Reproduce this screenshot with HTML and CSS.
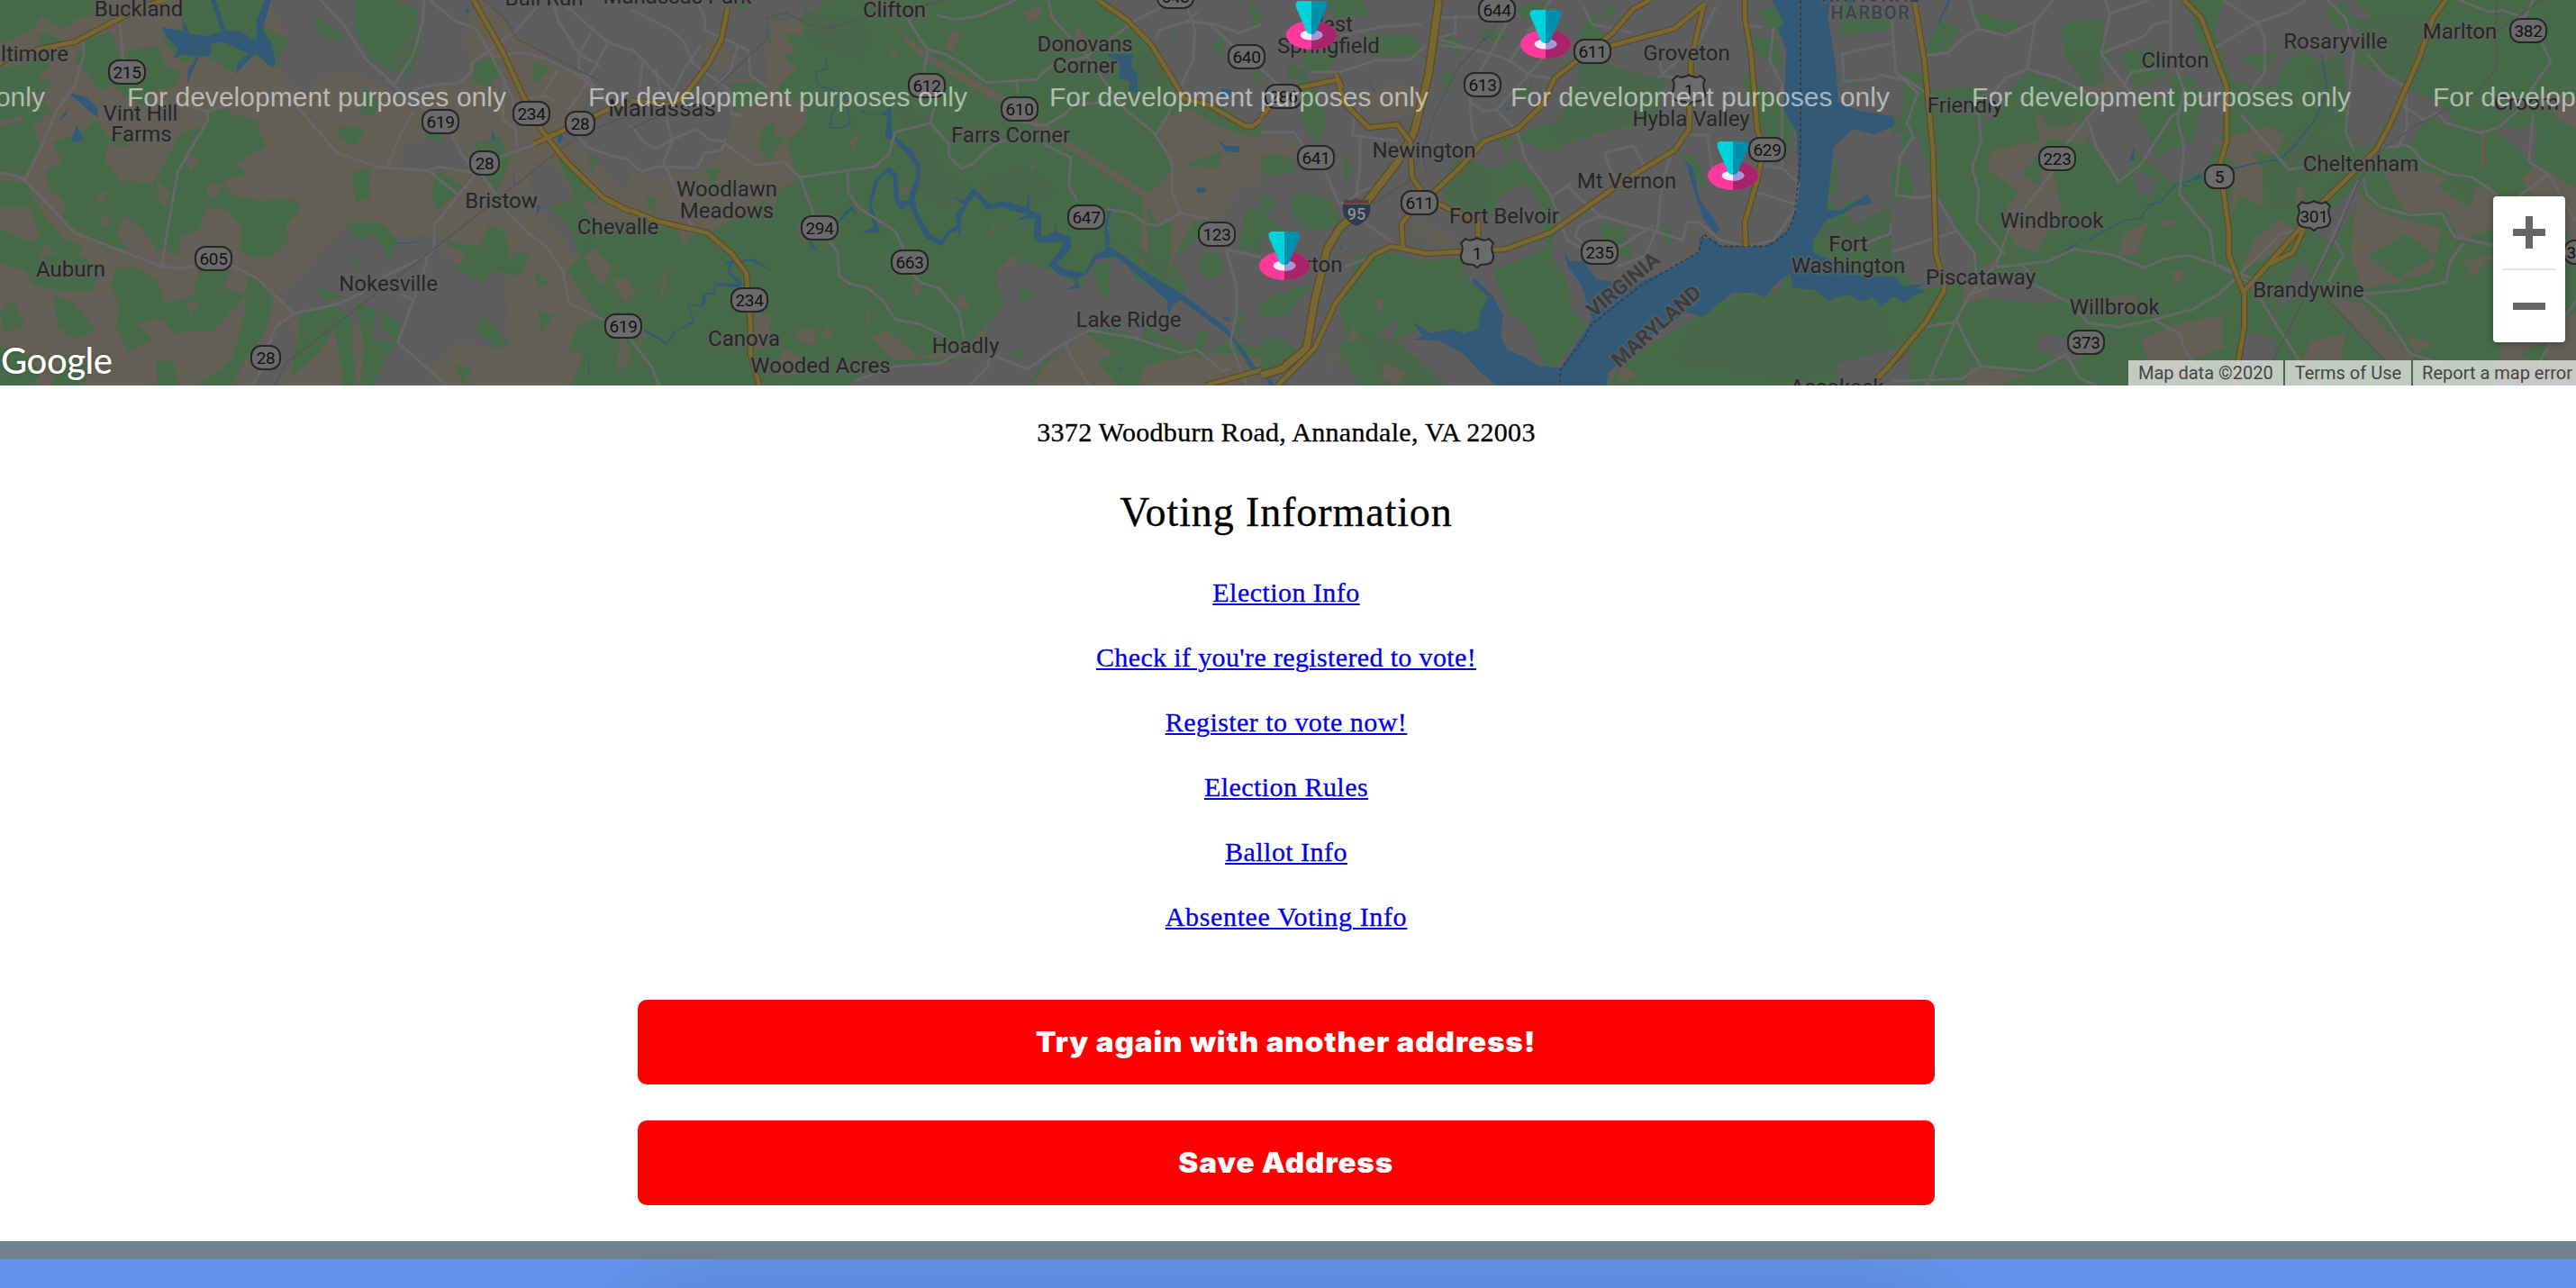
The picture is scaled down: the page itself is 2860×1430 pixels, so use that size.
FILE: index.html
```html
<!DOCTYPE html>
<html lang="en">
<head>
<meta charset="utf-8">
<title>Voting Information</title>
<link rel="stylesheet" href="styles.css">
</head>
<body>
<section class="map">
<svg class="map-canvas" viewBox="0 0 2860 428" width="2860" height="428">
  <defs>
    <g id="s3"><rect x="-20" y="-13" width="40" height="26" rx="11"/></g>
    <g id="s2"><rect x="-16" y="-13" width="32" height="26" rx="11"/></g>
    <path id="us" d="M-18 -10L-13 -15Q-9 -12 -5 -14Q-2 -14 0 -16Q2 -14 5 -14Q9 -12 13 -15L18 -10Q15 -6 17 0Q20 7 15 12Q10 14 4 14L0 17L-4 14Q-10 14 -15 12Q-20 7 -17 0Q-15 -6 -18 -10Z"/>
    <g id="pin">
      <ellipse rx="28" ry="16" fill="#ff3a9c"/><path d="M0-16A28 16 0 0 1 0 16Z" fill="#a8246a"/>
      <ellipse rx="12.3" ry="5.5" fill="#f4eeff"/><path d="M0-5.500A12.300 5.500 0 0 1 0 5.500Z" fill="#a596d8"/>
      <path d="M0-38H-14Q-19-37-17-31L-5-3Q-3-1 0-1Z" fill="#00d2dc"/><path d="M0-38H14Q19-37 17-31L5-3Q3-1 0-1Z" fill="#008fae"/>
    </g>
  </defs>
  <rect width="2860" height="428" fill="#656056"/>
  <!-- west: farmland -->
  <g transform="scale(.45918 .33333)">
    <path class="urban" d="M650 0H1150L1125 130 1140 240 1050 290 1000 370 960 310 850 240 770 250 745 320 700 280 665 200 700 130ZM1180 0H1568V560L1500 640 1440 520 1340 465 1380 430 1440 260 1370 230 1290 160 1230 90ZM1290 540L1350 560 1405 720 1400 860 1330 750 1280 620ZM680 980L790 820 850 740 930 790 1040 780 1080 860 1150 910 1220 900 1235 1170 1110 1140 1030 1240 1050 1284H880L880 1100 800 1030 710 1040ZM690 1060L720 1120 710 1200 670 1284H610L650 1160ZM980 480L1080 450 1130 520 1120 570 970 560Z"/>
    <path class="wood" d="M0 0H230L235 50 190 60 150 95 100 55 70 110 0 145ZM90 115L125 110 155 150 105 155ZM210 130L270 105 290 180 380 150 400 215 440 240 420 290 370 300 350 350 290 310 270 285 240 300 210 240 180 200ZM440 0H650L620 80 700 130 665 230 610 180 560 240 500 185 440 210 390 130 440 90ZM0 225L60 215 95 170 120 220 90 260 130 270 100 310 60 320 80 370 20 400 0 400ZM0 420L60 400 40 350 100 330 125 370 80 420 95 490 75 570 40 590 0 575ZM125 470L200 440 230 400 260 450 330 460 300 490 260 480 255 540 290 600 370 610 410 510 440 440 520 410 570 380 620 400 640 490 570 545 600 580 540 600 560 650 640 670 710 660 730 690 690 750 700 800 660 850 610 860 580 830 585 760 550 700 500 690 480 770 440 780 430 850 380 830 340 760 300 720 280 780 310 830 250 820 190 770 150 740 160 680 120 630 110 570 150 540ZM170 580L200 560 230 640 190 650ZM0 600L60 610 100 700 150 790 200 820 190 860 130 840 95 790 70 690 0 690ZM0 760L60 800 120 790 90 860 150 840 210 860 240 920 220 970 150 970 80 950 60 900 0 880ZM280 890L330 890 380 930 400 1010 470 980 480 890 560 900 540 960 600 980 550 1050 520 1100 420 1110 390 1060 330 1080 370 1130 310 1170 280 1090 290 1020 270 960ZM130 980L180 1010 230 1100 180 1130 140 1090ZM600 900L660 1000 640 1110 580 1230 560 1284H480L560 1200 590 1060ZM30 1000L60 1080 10 1110 0 1040ZM0 1150L60 1180 100 1240 80 1284H0ZM380 1200L420 1205 430 1284H380ZM160 1180L220 1230 200 1284H120ZM860 0H960L1015 30 1000 110 950 240 900 200 860 110ZM960 240L1020 70 1015 180 980 260ZM760 50L830 120 820 140 770 120ZM500 380L550 360 580 440 540 500 500 470ZM820 420L880 430 860 490 820 460ZM880 290L920 340 900 390 870 380ZM850 570L890 560 895 660 860 670ZM1030 400L1080 400 1070 480 1030 460ZM1060 570L1120 620 1060 700 1040 650ZM1150 210L1200 180 1210 240 1180 290 1140 270ZM1290 200L1330 230 1290 280ZM1150 480L1210 450 1230 550 1200 640 1160 580ZM830 740L920 740 960 800 940 870 900 780 860 800ZM850 840L870 880 860 910ZM1060 800L1160 820 1180 750 1220 770 1230 830 1280 850 1260 920 1190 900 1170 940 1100 900 1130 850ZM720 1040L800 1010 850 1060 860 1284H830L810 1100 760 1190 700 1260 720 1130ZM860 1010L910 1030 900 1140 960 1130 900 1284H870L880 1150ZM925 1030L970 1080 960 1130 920 1090ZM1170 1050L1210 1110 1230 1140 1200 1160 1150 1100ZM1330 690L1400 660 1440 740 1568 760V1100L1500 1060 1450 960 1480 890 1440 830 1400 860 1380 760ZM1340 500L1400 560 1450 680 1390 660ZM1410 850L1440 930 1568 1100V1284H1380L1410 1180 1370 1170 1400 1080 1450 1060 1370 900ZM1290 900L1330 950 1300 950ZM1300 1030L1335 1050 1310 1110ZM1100 1210L1140 1230 1120 1284ZM1420 500L1450 530 1430 570ZM760 950L830 990 780 1000Z"/>
    <path class="field" d="M230 660L260 630 250 680ZM240 700L270 740 250 760ZM500 610L540 620 520 660 500 650ZM380 600L410 640 400 690 380 660ZM440 510L480 530 460 570ZM1480 930L1540 930 1510 1010ZM1500 1110L1540 1190 1490 1240ZM450 1000L480 1010 460 1050ZM1230 830L1245 850 1230 860Z"/>
    <path class="lake" d="M390 90L445 105 440 60 460 115 500 120 535 105 510 0H522L545 100 580 105 620 135V70L640 0H655L635 100 655 140 667 210 655 223 620 178 590 215 570 248 575 210 600 178 540 140 512 145 508 185 480 190 452 282 455 230 475 190 440 180 420 195 430 160 405 130ZM170 310L210 325 236 360V392L170 315ZM163 358L143 400 160 385ZM185 418L202 460 190 475 172 468ZM950 803Q990 820 1030 790Q1000 820 955 810ZM1210 893L1250 899 1215 897ZM1300 680L1308 690 1295 722ZM1240 540L1245 620 1242 620ZM1188 425L1200 472 1190 465ZM1350 450L1362 450 1355 480 1346 470ZM1125 25L1135 35 1128 50ZM1425 790L1408 860 1422 800ZM1420 1170L1427 1250 1424 1250ZM1552 1090L1568 1105V1120Z"/>
    <path class="rd" d="M290 80L298 200M200 140L203 180 180 290 140 360 100 490 60 600 180 775 390 887 440 895 470 885M390 887L430 570 503 400 500 370 440 345M500 370L545 350M0 577Q40 580 60 600M560 885L625 930 710 1045 665 1090 650 1150M635 1225L610 1284M775 0L830 80 885 200 925 245 985 330 1040 370M1025 0L1023 65 1000 180 955 280M690 310L740 390 815 508 915 557 1035 568 1060 555 1145 575 1205 525 1300 478M1035 568L1105 645M1000 370L960 470 938 557M1085 430L1115 510 1140 555M1300 20L1250 100 1140 210 1140 240 1110 275 1040 285 1000 300M1150 580L1050 750 1050 825 1035 850 930 920 870 980 810 1015 710 1045M1165 580L1230 710 1275 775 1320 820 1360 900 1375 1010 1460 1065M1035 850L1025 900 1000 1000 962 1140 1080 1284M970 980L1000 1000M1040 0L1100 70 1150 95 1190 190 1260 175 1320 195 1400 250 1470 340 1510 350M1340 20L1350 70 1400 180V230L1440 290M1370 20L1435 100 1470 140 1550 180 1568 200M1430 110L1400 180 1450 220M1470 140L1400 320 1370 370M1350 230L1310 320M1190 190L1240 330 1250 490M1220 260L1215 400 1245 430M1260 330L1320 320 1345 340M1380 430L1420 490 1480 520 1520 530 1550 570 1568 565M1568 210L1550 350 1568 400"/>
    <path class="rail" d="M665 1284L690 1210 1030 850 1400 450 1568 360M1170 0L1220 60 1250 130 1450 270"/>
    <path class="hw-e" d="M-20 225L20 195 90 165 180 140 270 75 350 20 400 0M1145 0L1215 170 1265 320 1310 435 1370 540 1460 660 1568 735M1290 480L1470 365 1568 330"/>
    <path class="hw" d="M-20 225L20 195 90 165 180 140 270 75 350 20 400 0M1145 0L1215 170 1265 320 1310 435 1370 540 1460 660 1568 735M1290 480L1470 365 1568 330"/>
  </g>
  <!-- centre-west: woods along the Occoquan -->
  <g transform="translate(700 0) scale(.45918 .33333)">
    <path class="wood" d="M330 60L470 0H1568V1284H0V750L200 770 400 600 380 480 430 360 350 300 400 230 330 140Z"/>
    <path class="urban" d="M0 0H470L430 60 340 60 330 210 330 280 280 270 240 260 250 370 230 500 170 570 100 610 40 590 0 570ZM1150 0H1568V430L1500 420 1430 350 1350 330 1290 210 1230 110ZM1500 600L1568 590V1170L1460 1140 1380 1170 1300 1120 1280 1150 1160 1090 1100 1100 1060 1160 1000 1200 960 1284H530L570 1240 800 1200 850 1180 870 1080 900 1010 880 910 960 870 1040 920 1090 960 1130 850 1200 870 1220 930 1310 990 1350 960 1310 870 1390 770 1440 670Z"/>
    <path class="field" d="M0 570L40 590 170 570 230 500 250 370 300 350 400 360 430 400 380 470 400 590 360 620 350 690 290 640 240 700 200 690 160 760 130 820 110 760 0 720ZM190 120L270 200 230 250 170 180ZM340 70L410 60 420 120 370 110 400 180 340 180ZM780 90L800 130 780 150 790 180 760 160ZM625 160L650 175 630 190ZM950 40L1000 15 990 60 960 70ZM555 430L540 510 530 480ZM665 600L675 640 650 660ZM970 545L985 555 965 580ZM610 60L720 180 930 340 1060 470 1250 640V880L1230 880 1240 660 1050 490 900 350 700 190ZM1280 400L1350 360 1420 420 1568 480V600L1480 620 1430 720 1360 740 1310 870 1300 960 1310 740 1270 740 1240 660 1310 570 1280 460ZM80 900L90 930 70 1020ZM20 1080L40 1120 20 1150ZM300 1040L340 1050 330 1150 300 1180ZM370 1160L410 1190 400 1250 350 1250ZM395 1100L440 1095 450 1150 410 1140ZM480 1080L490 1130 460 1120ZM570 1010L580 1060 570 1080ZM680 940L710 950 690 990ZM800 970L820 1030 785 1020ZM740 980L730 1010ZM580 1120L640 1200 840 1190 870 1060 820 1150 700 1190 620 1100ZM880 910L930 840 935 880ZM1100 1110L1170 1180 1130 1210 1180 1284H970L1000 1220ZM1240 1220L1390 1170 1568 1200V1284H1230ZM870 750L885 760 870 785ZM580 0L600 30 640 10ZM0 950L15 980 0 1010ZM1080 80L1120 170 1070 150ZM400 750L430 740 420 820Z"/>
    <path class="wood" d="M240 280L320 270 330 320 250 370ZM180 560L220 560 200 610 240 620 200 640ZM30 660L60 650 60 710ZM320 420L350 410 350 460 380 450 330 540 310 490ZM1340 550L1430 500 1420 560ZM1490 680L1568 750V850L1470 830ZM1380 850L1420 840 1440 900 1400 930 1370 890ZM1460 1030L1480 1040 1470 1150ZM1370 1110L1400 1100 1380 1200 1360 1170ZM940 960L980 970 950 1020ZM1120 880L1160 870 1160 1000 1130 970ZM920 1170L950 1160 940 1210ZM1240 1080L1300 1130 1240 1140ZM1400 160L1430 120 1440 190ZM1500 200L1568 190V290L1510 270ZM1310 110L1320 130 1300 140ZM1260 200L1340 340 1280 330ZM1490 0L1530 50 1510 110ZM260 0L290 15 265 40ZM120 70L130 90 115 90Z"/>
    <path class="park" d="M420 30L580 100 560 200 430 140ZM640 350L720 400 750 560 820 620 760 700 700 640 680 480ZM850 600L950 560 1040 640 960 690 870 670ZM1220 180L1290 210 1280 300 1230 290ZM1200 800L1310 900 1280 930ZM1568 740L1500 830 1568 880Z"/>
    <path class="lake" d="M470 130L452 180 458 160ZM475 90L505 92 475 95ZM555 365L575 380 605 382 630 355 632 445 655 470 680 500 700 545V600L687 660 695 710 725 780 750 800 765 770 790 750 785 715 805 680 780 658 805 665 830 625 870 680 905 670 955 690 963 643 966 700 993 715V790L1025 775V738L1032 775 1065 790V830L1030 880 1050 895 1100 910 1120 850 1150 830 1145 760 1158 690 1180 695 1160 710 1152 760 1160 800 1155 820 1185 845 1240 900 1340 985 1440 1090 1480 1160 1510 1220 1568 1250V1284H1550L1495 1220 1455 1130 1420 1090 1330 1000 1310 1020 1300 1050 1297 1000 1230 920 1175 855 1130 860 1100 915 1080 930 1085 960 1055 965 1075 950V930L1035 915 1010 880 1030 850 1050 805 990 810 975 790 978 725 930 735 960 715 895 690 860 700 835 650 815 680 800 720 797 795 790 765 770 780 753 820 715 795 685 720 675 680 655 700 638 670 635 590 622 575 600 600 583 680 600 760 605 775 560 775 590 755 580 720 577 670 590 600 625 555 645 580 650 670 670 670 690 590 690 550 660 500 640 470 615 460 622 385 565 380ZM500 745L515 710 535 685 550 722 535 700 512 730ZM430 795L455 840 435 825ZM1150 180L1215 180 1210 220 1227 250 1225 310 1205 300 1208 270 1180 260 1185 220ZM1420 465L1440 485 1475 487 1470 508 1440 505ZM1370 625L1390 625V642H1370ZM225 872L300 862 340 900 315 885 290 868 245 880 240 905 270 940 265 960 205 950 205 980 180 980 183 1005 175 1022 140 1015 155 1075 110 1105 88 1150 30 1100 40 1100 88 1140 105 1105 150 1070 138 1012 172 1018 175 980 200 972 205 942 260 945 235 910 238 880ZM1430 1060L1448 1055V1075ZM1180 1230L1190 1225 1178 1242ZM1430 295L1455 300 1450 320 1425 318Z"/>
    <path class="creek" d="M472 195L475 228 447 240 455 285 500 305 520 320 490 370 482 425 508 425 532 412 524 355"/>
    <path class="rd" d="M670 60L700 130 718 165 710 240M718 165L760 180 800 210 860 275 980 265 1020 215 1100 190 1170 120 1230 60 1290 20M740 50L785 65 850 50 930 0M1010 0L1020 60 1100 180 1140 260 1200 370 1265 440 1310 540V640L1330 710 1400 730M933 270L937 310M733 360L725 410 640 440 625 515 590 555 410 590M725 410L770 480V520L800 560 830 545 850 515 880 480 910 465M930 400L1000 420 1050 380 1070 350 1150 340M1000 480L1065 525 1060 620 1080 670M1150 695L1210 710 1245 745 1275 752 1330 710M525 575L527 640 550 690 640 770 660 830M680 910L700 940 745 960 795 1040 807 1130M0 415L30 470 60 495 100 465 160 430 190 465 220 470 300 550 370 540 410 590 450 740M480 800L500 840 505 920 530 945 575 960 610 1000 640 1065 700 1080 760 1120M540 1270L640 1220 750 1210 810 1160M820 1284L865 1220 870 1180 960 1230 1040 1150 1110 1100 1220 1125 1260 1145 1330 1175 1370 1165 1430 1235 1450 1230M1050 1140L1070 1200 1110 1284M1440 830L1465 950V1050L1450 1140 1490 1284M1440 830L1568 870M1340 0L1365 100 1360 200 1300 380 1270 450M1350 70L1410 80 1470 110 1568 60M1400 80L1470 170M1270 130L1280 100 1350 70 1370 40M0 30L100 100 130 140 150 210 200 260 240 300 245 380 270 385M0 160L30 200 100 300 130 370M180 60L180 100 260 150 240 240 180 330M170 150L130 230 100 310M260 150L285 170 290 250 330 290M30 200L20 320M60 230L100 470 80 540 150 760M0 540L25 570 70 555 160 560 180 510 220 500 230 460M0 1130L50 1220 70 1284M160 0L180 60M1530 400L1550 440 1568 450"/>
    <path class="rail" d="M0 430L200 300 330 130V60L375 42 460 100 560 60M700 20L760 0"/>
    <path class="hw-e" d="M235 25L220 130 190 210 130 320 100 350 0 335M0 700L60 735 185 775 245 845 280 910 290 1080V1180L312 1284M1130 0L1200 65 1260 150 1340 330 1400 350 1485 420H1505L1568 350M1390 1284L1568 1215"/>
    <path class="hw" d="M235 25L220 130 190 210 130 320 100 350 0 335M0 700L60 735 185 775 245 845 280 910 290 1080V1180L312 1284M1130 0L1200 65 1260 150 1340 330 1400 350 1485 420H1505L1568 350M1390 1284L1568 1215"/>
  </g>
  <!-- centre-east: Potomac -->
  <g transform="translate(1400 0) scale(.45918 .33333)">
    <rect width="1568" height="1290" fill="#5e5e5e"/>
    <path class="wood" d="M235 850L310 840 400 870 480 860 500 930 550 990 580 1080 550 1120 520 1110 460 1100 380 1100 320 1130 330 1060 270 1130 290 1200 350 1284H240L180 1160 210 1130 190 1030 210 940ZM700 500L850 430 1010 400 900 360 980 280 850 220 820 280 750 290 730 400 650 430 590 500 640 560 700 640 720 700 700 850 740 940 750 1030 790 1080 720 1210 690 1220 640 1080 600 1040 560 900 690 830 680 700 620 560 560 450ZM510 530L550 560 640 540 650 600 580 650 560 720 470 700 440 650ZM70 660L100 640 160 660 200 740 130 770 80 730ZM0 640L40 680 10 720 60 770 0 800ZM85 220L120 270 160 400 140 480 100 420ZM100 170L200 150 160 240 100 230ZM240 120L360 110 390 180 270 190ZM160 0H240L260 50 180 60ZM0 480L60 510 90 570 30 590 0 570ZM440 110L490 140 480 180 440 160ZM440 240L470 250 440 310ZM520 90L600 110 570 150ZM600 20L690 10 680 100 640 60ZM840 0L860 30 830 80ZM770 100L800 45 830 130 800 250ZM1160 240L1280 350 1290 430 1270 530 1220 450 1180 340ZM1180 120L1250 130 1260 230 1200 180ZM1200 30L1290 20 1260 120 1230 100ZM1010 500L1060 540 1080 640 1050 600ZM820 740L880 760 900 860 830 840ZM130 940L60 1050 0 1060V1000ZM40 1120L90 1170 60 1240 0 1250V1140ZM1390 240L1568 400V340L1440 270ZM1400 0L1568 90 1400 120ZM1290 480L1310 600 1400 700 1420 660 1360 640ZM1400 500L1568 440V1290H1290L1380 1200 1280 920ZM1100 620L1150 560 1130 560ZM960 720L1000 800 980 820ZM200 620L220 560 200 500Z"/>
    <path class="wood" d="M840 1284L870 1210 1060 1050 1150 975 1230 990 1280 910 1290 960 1400 990 1568 1010V1284Z"/>
    <path class="park" d="M1040 1090L1160 1000 1310 950 1380 1010 1500 1030 1530 1150 1400 1240 1260 1260 1120 1220 1000 1200ZM770 130L820 150 850 230 980 260 960 390 720 470 700 430 770 290ZM440 640L470 530 540 560 560 640 520 720ZM250 1120L330 1130 450 1284H300ZM60 210L110 240 100 270 60 260ZM600 330L660 260 650 320ZM1340 780L1420 720 1500 640 1568 760 1520 860Z"/>
    <path class="field" d="M220 320L310 280 390 290 380 380 270 400ZM0 440L90 480 80 530 30 510 0 520ZM360 760L380 730 470 790 450 840 430 820ZM270 1000L295 990 290 1050ZM170 1180L185 1190 160 1260ZM300 1210L350 1240 330 1284 290 1260ZM870 1210L910 1250 860 1284ZM220 1080L240 1130 210 1140Z"/>
    <path class="urban" d="M1410 290L1530 260 1568 330V650L1430 750 1420 700 1480 650 1400 680 1390 480 1530 430 1500 330ZM1390 1210L1568 1150V1284H1400Z"/>
    <path class="lake" d="M1235 0H1378L1370 50 1390 220 1395 340 1450 370 1500 380 1530 390 1532 420 1480 447 1430 430 1385 490 1368 700 1405 700 1435 675 1465 647 1480 680 1440 685 1410 710 1370 730 1335 800V840L1400 880 1450 920 1530 920 1568 970V990L1530 985 1500 1020 1480 990 1450 1005 1420 980 1370 1000 1340 965 1285 960 1280 910 1240 950 1220 990 1190 975 1140 975 1068 1055 1030 1040 950 1110 840 1240 835 1284H570L530 1240 490 1180 430 1135 370 1130 390 1120 368 1072 410 1110 460 1095 490 1110 525 1095 530 1040 550 990 510 940 515 925 560 985 585 1050 580 1120 595 1165 640 1190 670 1220 725 1225 780 1110 800 1060 775 950 740 885 735 835 745 870 780 870 810 930 900 950 1000 890 1060 840V790L1100 800 1110 820H1220L1280 760 1300 600 1295 440 1265 370 1270 170 1250 90 1265 80ZM1025 530L1045 560 1060 660 1110 760 1100 780 1070 730 1048 640ZM0 1225L35 1284H20ZM1400 0H1440L1430 20ZM535 125L552 120 540 140ZM258 268L278 305 272 305ZM590 358L605 360 597 368ZM325 705H350ZM190 795L197 835 192 830Z"/>
    <path class="rd" d="M430 150L520 165 600 200 650 250 700 260M470 50L470 110 420 130M420 60L540 55M420 125L550 180M600 60L550 190 505 290V340L540 370 570 365 640 260 690 180M700 0L650 100 600 210M505 340L510 430 520 470M570 365L620 440 640 530 700 650 740 800 780 830M780 20L800 80 900 110M1100 20L1060 140 960 260M960 160L970 250 1030 270M830 510L900 485 930 560M830 510L850 580 870 600M1000 490L970 600 960 750 930 850 860 890M1030 450L1080 450 1090 560M700 660L750 610M740 620L820 720 770 750 760 790 800 830 870 820 950 750M820 720L950 770 1020 800 1030 740 1060 740 1110 800 1180 820 1240 800 1290 700 1300 610 1260 560 1210 550M1200 640L1290 680M1210 90L1160 80M1240 90L1230 200 1260 280V560M1410 270L1405 180 1568 130M1410 270L1480 265 1500 250 1568 270M155 570L190 680 220 660 240 640 290 610M240 460L240 550 230 650M0 440H80L110 500 150 520M220 450L330 470M220 450L225 400 240 350M120 240L190 240 280 200H360L400 150M190 120L290 90 390 80M230 720L320 810M200 890L280 850M0 230L40 280M1568 660L1530 720 1520 780 1480 800 1420 840M1500 1040M640 100L700 90"/>
    <path class="rail" d="M600 0L560 100 480 220 420 380 400 470 360 600 270 680M390 520L400 570M120 1100L80 1200 50 1284"/>
    <path class="border" d="M1305 0V520L1290 720 1270 780 1225 820H1110L1070 780 1058 840 920 950 800 1080 780 1130 725 1230 722 1284"/>
    <path class="hw-e wide" d="M430 0L405 250 370 440 330 540 240 700 190 760 160 830 130 1000 110 1160 50 1230 0 1250"/>
    <path class="hw wide" d="M430 0L405 250 370 440 330 540 240 700 190 760 160 830 130 1000 110 1160 50 1230 0 1250"/>
    <path class="hw-e" d="M0 390L50 310 100 290 185 265 200 340 260 425 330 415 360 470 365 590 395 650 340 745 343 830M180 245L195 290M940 0L900 30 850 110 710 260 680 350 620 430 540 470 480 560 410 650M840 155L1000 95 1075 10M1070 20L1040 200 1035 430 1000 500 880 600 700 775 590 830 400 845 315 820 270 850 180 1010 130 1160 40 1284M430 680L525 740V800M1170 0V60L1185 180 1200 430 1215 500 1200 600 1170 740 1172 820M1568 1150L1490 1260"/>
    <path class="hw" d="M0 390L50 310 100 290 185 265 200 340 260 425 330 415 360 470 365 590 395 650 340 745 343 830M180 245L195 290M940 0L900 30 850 110 710 260 680 350 620 430 540 470 480 560 410 650M840 155L1000 95 1075 10M1070 20L1040 200 1035 430 1000 500 880 600 700 775 590 830 400 845 315 820 270 850 180 1010 130 1160 40 1284M430 680L525 740V800M1170 0V60L1185 180 1200 430 1215 500 1200 600 1170 740 1172 820M1568 1150L1490 1260"/>
  </g>
  <!-- east: Prince George's County -->
  <g transform="translate(2100 0) scale(.48469 .33333)">
    <path class="wood" d="M42 0H1568V1290H42Z"/>
    <path class="urban" d="M0 0H680L700 130 760 270V430L720 560 640 610 560 500 530 600 450 470 440 380 520 300 440 290 310 240 180 440 240 380 200 290 90 300 40 250 0 240ZM760 0H1060L1110 80 1050 200 1170 270 1180 350 1090 500 1050 460 1040 250 940 170 900 210 880 290 780 270 740 110ZM1150 290L1280 340 1300 400 1220 400 1190 470 1120 500ZM0 440L60 450 100 640 150 770 190 840 180 940 60 960 0 830ZM550 560L610 600 600 660 560 640ZM200 920L330 950 400 1000 330 1010 190 990ZM340 1110L480 1150 410 1210 330 1160ZM930 880L950 870 960 960 880 1030ZM800 1110L880 1120 880 1200 790 1220ZM960 760L1080 600 1060 700 1010 820ZM600 50L560 130 500 170 520 60ZM1480 420L1470 560 1440 500 1380 430Z"/>
    <path class="field" d="M430 160L480 150 460 240 435 230ZM330 380L460 420 440 480 360 460 300 580 370 560 390 700 330 840 280 820 260 700 290 640 220 560 230 500 340 470ZM420 230L530 270 500 340 440 300ZM860 420L900 450 880 520 820 500 850 560 850 690 800 650 770 750 790 560 740 470ZM1070 640L1110 700 1180 730 1260 760 1240 900 1160 940 1080 960 1050 860 1060 740ZM1120 540L1200 560 1380 640V760L1300 800 1270 700 1180 710 1140 620ZM1350 430V560H1360V430ZM1480 550L1568 630V820L1500 700 1440 600ZM890 730L940 780 870 850 800 900 830 800ZM530 780L590 740 560 850 520 850ZM620 730L660 740 620 760ZM570 1130L650 1080 760 1050 760 1160 690 1200 650 1284 590 1210ZM960 1140L1040 1110 1030 1200 940 1200ZM1000 990L1080 1010 1200 1200H1130L1060 1090ZM1380 850L1330 920 1310 870ZM1400 1140L1568 1040V1284H1380ZM490 990L570 980 530 1060ZM170 930L240 860 220 990 160 1010ZM180 1220L320 1250 240 1284H170ZM930 610L950 640 930 700ZM1000 340L1020 300 1010 420ZM1480 300L1568 330V430L1530 400ZM640 900L680 900 650 950ZM1180 1120L1240 1140 1200 1180Z"/>
    <path class="wood" d="M30 240L80 250 60 430 20 520ZM170 20L250 70 280 60 300 100 220 110ZM390 80L480 60 500 200 470 240 400 200ZM520 180L600 160 640 240 560 300ZM0 560L40 540 50 660 0 670ZM570 340L720 290 690 470 600 520ZM640 250L700 260 680 330 640 310ZM580 310L640 350 600 440 560 400ZM990 30L1040 10 1070 90 1020 100ZM800 190L890 170 850 250ZM110 70L160 90 130 160 70 190ZM1240 330L1290 400 1350 320 1280 300ZM300 580L340 560 340 620ZM1180 780L1250 850 1160 930 1090 850ZM1250 620L1290 580 1330 700ZM1440 1180L1500 1130 1500 1240Z"/>
    <path class="park" d="M1060 60L1230 70 1200 270 1110 230ZM860 570L940 420 1050 500 930 610 910 700 870 680ZM960 230L1040 160 1030 400 980 420ZM400 180L470 190 490 280 440 290ZM340 380L420 340 410 420 360 430ZM1290 600L1340 610 1330 690ZM0 380H20L20 440 0 450Z"/>
    <path class="lake" d="M130 0H136L105 90 110 60ZM555 487L557 530 545 535ZM0 940L20 955 80 945 55 960 80 970 50 985 30 1008 0 985ZM0 380L8 410 0 430ZM50 990L65 1008ZM390 840L440 795 410 830ZM690 590L715 575 700 600ZM645 615L680 618 680 624Z"/>
    <path class="creek" d="M985 180L998 300 970 400 920 490 890 530 820 548 760 570 700 595 650 618 615 675 592 680 570 728 535 732 500 760 450 800"/>
    <path class="rd" d="M0 60L10 240 90 320 200 380 205 470 185 560 200 640 195 740 260 850M10 240L60 310 35 410 50 455 20 520 10 650 60 660 100 650M100 650L150 770 190 840 195 950M0 840L150 770M180 0L190 60 200 95 260 120 330 70 370 0M80 185L130 175 160 130 200 95M330 70L310 230 260 260 200 380M310 230L380 260 450 310 480 330M480 340L400 480M370 570L270 760 240 880 180 980 150 1060 80 1284M240 890L360 870 420 830 510 850 580 892 620 865 680 850 740 880 820 940 970 1284M640 0V180L670 300 655 400 670 490 660 650 730 770 740 880 830 930M490 0L500 50 480 180 560 330M500 45L590 0M480 180L520 155 580 120 600 80 640 70M760 0L838 75 740 160M838 75L910 40 950 0M838 75L855 130V240L820 310 700 320M530 290L550 240 640 220M450 400L470 490 520 605 570 550 640 390 660 370M800 380L860 480 910 565 950 555M1000 0L1040 60 1060 160 1040 440 1060 500M1090 180L1130 250 1180 290 1170 350 1220 400 1250 375 1270 410 1350 443 1390 425 1450 350M1180 290L1180 430 1160 490 1110 490M1160 480L1190 490 1220 540 1280 580 1330 590 1390 650M1080 590L1090 650 1120 690 1190 717 1260 710 1290 790 1390 820M1310 810L1280 870 1270 940 1190 965 1080 980 1000 960M1300 0L1370 40 1400 35 1450 60 1470 0M1490 145L1510 205 1460 310M1470 380L1460 540 1505 580 1450 640 1430 660M1505 580L1568 740M1070 600L960 950M1015 800L1035 850 1000 940M1080 990L1130 1050 1190 1180 1260 1210M800 910L890 780 950 760M800 910L750 980 690 1030 600 1065 520 1090 450 1075 410 1010 330 950 280 930 180 980M600 1065L660 1110 670 1160 710 1250M80 1090L150 1070 180 1160 205 1220 330 1235 400 1180 430 1260 470 1284M0 1270L160 1262 205 1220M300 880L320 920M1568 1000L1540 1060 1480 1220"/>
    <path class="rail" d="M1385 0V230L1340 310 1200 420 1120 500 1070 610 1015 800 940 1010 870 1210M1000 1000L1130 1200M1490 0L1380 110"/>
    <path class="hw-e" d="M52 0L75 200 95 500 102 850 120 930V970L80 1070 0 1210M670 0L710 60 768 290V470L752 550 773 770V850L808 980V1090L785 1284M1270 0L1240 60 1210 190 1140 420 1110 500 990 670 900 820 808 970M945 760L920 840 865 880"/>
    <path class="hw" d="M52 0L75 200 95 500 102 850 120 930V970L80 1070 0 1210M670 0L710 60 768 290V470L752 550 773 770V850L808 980V1090L785 1284M1270 0L1240 60 1210 190 1140 420 1110 500 990 670 900 820 808 970M945 760L920 840 865 880"/>
  </g>
  <g class="label">
    <text x="154" y="18">Buckland</text><text class="end" x="76" y="68">New Baltimore</text><text x="604" y="6">Bull Run</text><text x="752" y="4">Manassas Park</text>
    <text x="156" y="134">Vint Hill</text><text x="157" y="157">Farms</text><text class="big" x="735" y="129">Manassas</text><text x="556.500" y="231">Bristow</text><text x="686" y="260">Chevalle</text><text x="78.500" y="307">Auburn</text><text x="431" y="323">Nokesville</text>
    <text x="993" y="19">Clifton</text><text x="1204.600" y="57">Donovans</text><text x="1204.600" y="81">Corner</text><text x="1122" y="158">Farrs Corner</text><text x="807" y="218">Woodlawn</text><text x="807" y="242">Meadows</text><text x="826" y="384">Canova</text><text x="911" y="414">Wooded Acres</text><text x="1072" y="392">Hoadly</text><text x="1253" y="363">Lake Ridge</text>
    <text x="1475" y="35">West</text><text x="1475" y="59">Springfield</text><text x="1581" y="175">Newington</text><text x="1872.500" y="67">Groveton</text><text x="1877.500" y="140">Hybla Valley</text><text x="1806" y="209">Mt Vernon</text><text x="1670" y="248">Fort Belvoir</text><text class="end" x="1490.500" y="302">Lorton</text><text x="2052" y="279">Fort</text><text x="2052" y="303">Washington</text>
    <text x="2181.500" y="125">Friendly</text><text x="2415" y="75">Clinton</text><text x="2593" y="54">Rosaryville</text><text x="2731" y="43">Marlton</text><text x="2621" y="190">Cheltenham</text><text x="2278" y="253">Windbrook</text><text x="2199" y="316">Piscataway</text><text x="2347.700" y="349">Willbrook</text><text x="2563" y="330">Brandywine</text><text x="2805" y="122">Croom</text><text x="2039.600" y="438">Accokeek</text>
    <text class="spaced" x="2077" y="2">NATIONAL</text><text class="spaced" x="2077" y="21">HARBOR</text>
    <text class="state" transform="translate(1807 322) rotate(-40)">VIRGINIA</text><text class="state" transform="translate(1844 368) rotate(-41.500)">MARYLAND</text>
  </g>
  <g class="shield">
    <use href="#s3" x="141" y="80"/><use href="#s3" x="489" y="135"/><use href="#s3" x="590" y="126"/><use href="#s2" x="644" y="137"/><use href="#s2" x="538" y="181"/><use href="#s3" x="237" y="287"/><use href="#s2" x="295" y="397"/><use href="#s3" x="692" y="362"/><use href="#s3" x="1029" y="95"/><use href="#s3" x="1132" y="121"/><use href="#s3" x="910" y="253"/><use href="#s3" x="1010" y="291"/><use href="#s3" x="832" y="333"/><use href="#s3" x="1206" y="241"/><use href="#s3" x="1351" y="260"/><use href="#s3" x="1384" y="63"/><use href="#s3" x="1305" y="-4"/><use href="#s3" x="1425" y="107"/><use href="#s3" x="1662" y="11"/><use href="#s3" x="1646" y="94"/><use href="#s3" x="1768" y="57"/><use href="#s3" x="1461" y="175"/><use href="#s3" x="1576" y="225"/><use href="#s3" x="1962" y="166"/><use href="#s3" x="1776" y="280"/><use href="#s3" x="2284" y="176"/><use href="#s2" x="2464" y="196"/><use href="#s3" x="2807" y="34"/><use href="#s3" x="2316" y="380"/><use href="#s3" x="2867" y="280"/>
    <use href="#us" x="1875" y="99"/><use href="#us" x="1640" y="280"/><use href="#us" x="2569" y="239"/>
  </g>
  <path d="M1491 227H1521Q1524 243 1506 251Q1488 243 1491 227Z" fill="#2b3c50"/><path d="M1492 226L1493 221Q1500 224 1506 220Q1512 224 1519 221L1520 226Z" fill="#653c3c"/><text class="i95" x="1506" y="244">95</text>
  <g class="num">
    <text x="141" y="87">215</text><text x="489" y="142">619</text><text x="590" y="133">234</text><text x="644" y="144">28</text><text x="538" y="188">28</text><text x="237" y="294">605</text><text x="295" y="404">28</text><text x="692" y="369">619</text><text x="1029" y="102">612</text><text x="1132" y="128">610</text><text x="910" y="260">294</text><text x="1010" y="298">663</text><text x="832" y="340">234</text><text x="1206" y="248">647</text><text x="1351" y="267">123</text><text x="1384" y="70">640</text><text x="1305" y="3">643</text><text x="1425" y="114">286</text><text x="1662" y="18">644</text><text x="1646" y="101">613</text><text x="1768" y="64">611</text><text x="1461" y="182">641</text><text x="1576" y="232">611</text><text x="1962" y="173">629</text><text x="1776" y="287">235</text><text x="2284" y="183">223</text><text x="2464" y="203">5</text><text x="2807" y="41">382</text><text x="2316" y="387">373</text><text x="2865" y="287">381</text><text x="1875" y="107">1</text><text x="1640" y="288">1</text><text x="2569" y="247">301</text>
  </g>
  <g class="dev">
    <text x="-371" y="118" textLength="421">For development purposes only</text><text x="141" y="118" textLength="421">For development purposes only</text><text x="653" y="118" textLength="421">For development purposes only</text><text x="1165" y="118" textLength="421">For development purposes only</text><text x="1677" y="118" textLength="421">For development purposes only</text><text x="2189" y="118" textLength="421">For development purposes only</text><text x="2701" y="118" textLength="421">For development purposes only</text>
  </g>
  <use href="#pin" x="1456" y="39"/><use href="#pin" x="1716" y="49"/><use href="#pin" x="1924" y="195"/><use href="#pin" x="1426" y="295"/>
</svg>
<span class="google">Google</span>
<div class="zoom">
  <svg width="36" height="36"><path d="M14 0h8v14h14v8H22v14h-8V22H0v-8h14z"/></svg>
  <i></i>
  <svg width="36" height="36"><path d="M0 14h36v8H0z"/></svg>
</div>
<div class="credits"><span>Map data ©2020</span><span>Terms of Use</span><span>Report a map error</span></div>
</section>
<main class="info">
  <p class="address">3372 Woodburn Road, Annandale, VA 22003</p>
  <h1>Voting Information</h1>
  <nav>
    <a href="#">Election Info</a>
    <a href="#">Check if you're registered to vote!</a>
    <a href="#">Register to vote now!</a>
    <a href="#">Election Rules</a>
    <a href="#">Ballot Info</a>
    <a href="#">Absentee Voting Info</a>
  </nav>
  <button><span>Try again with another address!</span></button>
  <button><span>Save Address</span></button>
</main>
<footer><div class="panel"></div></footer>
</body>
</html>
```
FILE: styles.css
```css
* { box-sizing: border-box; }
html { height: 1430px; overflow: hidden; }
body { margin: 0; height: 1430px; overflow: hidden; background: #fff; }
.map { position: relative; height: 428px; overflow: hidden; }
.map-canvas { display: block; }
.map-canvas path { vector-effect: non-scaling-stroke; stroke-linejoin: round; }
.wood { fill: #476a49; }
.park { fill: #4a664b; }
.field { fill: #656056; }
.urban { fill: #5e5e5e; }
.lake { fill: #325a78; }
.creek { fill: none; stroke: #325a78; stroke-width: 1.5; }
.rd { fill: none; stroke: #68686a; stroke-width: 3; }
.rail { fill: none; stroke: #555558; stroke-width: 1.5; }
.border { fill: none; stroke: #3b3b3b; stroke-width: 1.6; stroke-dasharray: 4 2.5; }
.hw-e { fill: none; stroke: #5c4a28; stroke-width: 7; }
.hw { fill: none; stroke: #786831; stroke-width: 4.8; }
.hw-e.wide { stroke-width: 10; }
.hw.wide { stroke-width: 7.5; }
.label text { font: 24px Roboto, sans-serif; text-anchor: middle; fill: #262626; stroke: #606060; stroke-width: 4px; stroke-opacity: .7; paint-order: stroke; stroke-linejoin: round; }
.label .end { text-anchor: end; }
.label .big { font-size: 26px; }
.label .spaced { font-size: 20px; font-weight: 500; letter-spacing: 1.6px; fill: #3b424c; }
.label .state { font-size: 23px; font-weight: 700; fill: #3c3c3c; }
.shield { fill: #6b6b6b; stroke: #262626; stroke-width: 2; }
.num text { font: 19px Roboto, sans-serif; text-anchor: middle; fill: #111; }
.num text { letter-spacing: -.4px; }
.i95 { font: 500 18px Roboto, sans-serif; text-anchor: middle; fill: #909090; }
.dev text { font: 30px "Liberation Sans", Arial, sans-serif; fill: rgba(255, 255, 255, .56); }
.google { position: absolute; left: 1px; top: 376px; font: 500 40px/48px Lato, sans-serif; letter-spacing: -.4px; color: #fff; text-shadow: 0 0 3px rgba(0, 0, 0, .35); }
.zoom { position: absolute; left: 2768px; top: 218px; width: 80px; height: 162px; padding: 22px 0; display: flex; flex-direction: column; align-items: center; justify-content: space-between; background: #fff; border-radius: 4px; box-shadow: 0 2px 8px rgba(0, 0, 0, .3); }
.zoom svg { fill: #666; }
.zoom i { width: 60px; height: 2px; background: #e6e6e6; }
.credits { position: absolute; right: 0; bottom: 0; display: flex; gap: 2px; font: 20px/28px Roboto, sans-serif; color: #444; }
.credits span { height: 28px; padding: 0 11px; background: rgba(245, 245, 245, .7); white-space: nowrap; }
.credits span:last-child { padding: 0 4px 0 10px; }
.info { height: 950px; padding: 32px 4px 40px 0; display: flex; flex-direction: column; align-items: center; font-family: "Liberation Serif", serif; color: #000; }
.address { margin: 0; font-size: 30px; line-height: 40px; letter-spacing: .3px; -webkit-text-stroke: .3px; }
h1 { margin: 40px 0; font-size: 46px; line-height: 58px; font-weight: 400; letter-spacing: .9px; -webkit-text-stroke: .3px; }
nav { display: flex; flex-direction: column; align-items: center; gap: 32px; margin-bottom: 72px; }
nav a { font-size: 30px; line-height: 40px; letter-spacing: .45px; color: #0000ee; text-decoration: underline 2px; text-underline-offset: 2px; -webkit-text-stroke: .3px; }
nav a:nth-child(2) { letter-spacing: .36px; }
nav a:last-child { letter-spacing: .65px; }
button { width: 1440px; height: 94px; margin: 0 0 40px; padding: 0; flex: none; border: 0; border-radius: 10px; background: #f00; color: #fff; font: 900 31px/94px Inter, sans-serif; letter-spacing: .8px; }
button span { display: inline-block; transform: scaleX(1.07); }
footer { height: 52px; overflow: hidden; border-top: 20px solid #708090; background: #6495ed; }
.panel { width: 1440px; height: 200px; margin: 62px auto 0; transform: translateX(-2px); box-shadow: 0 0 120px rgba(0, 0, 0, .22); }
```
